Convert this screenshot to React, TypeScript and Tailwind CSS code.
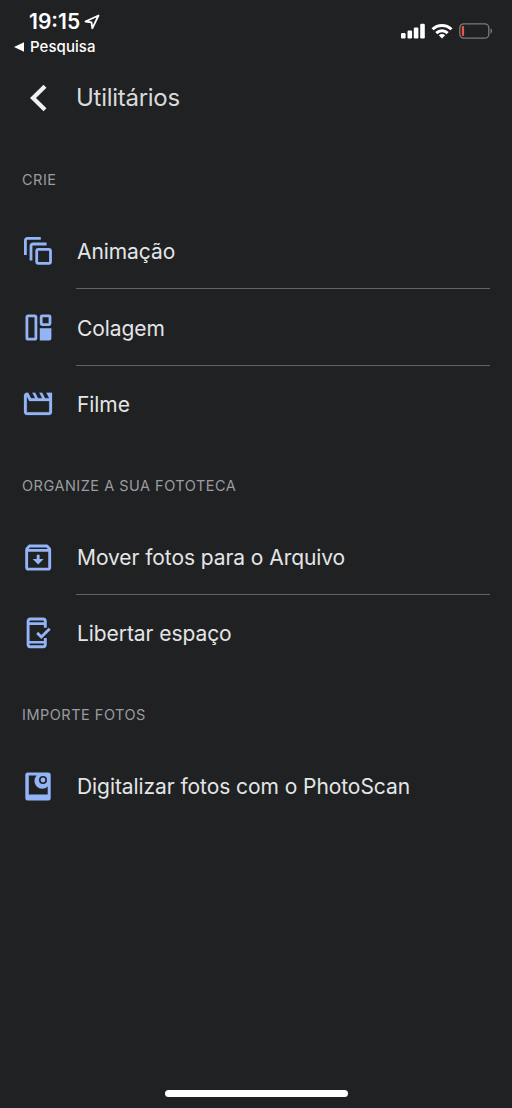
import type { ReactNode } from "react";

const ICON = "h-8 w-8 shrink-0 text-[#94b4f8]";

function AnimationIcon() {
  return (
    <svg viewBox="0 0 32 32" className={ICON} fill="none" stroke="currentColor" strokeWidth="2.8">
      <path d="M3.4 20V5.4a2 2 0 0 1 2-2H18.8" />
      <path d="M9 25.4V11a2 2 0 0 1 2-2H24.6" />
      <rect x="14.7" y="14.4" width="13.8" height="13.9" rx="1.6" />
    </svg>
  );
}

function CollageIcon() {
  return (
    <svg viewBox="0 0 32 32" className={ICON} fill="none" stroke="currentColor" strokeWidth="2.8">
      <rect x="4.9" y="4.8" width="9" height="23.4" rx="1.3" />
      <rect x="19.2" y="4.8" width="8.8" height="8.8" rx="1" />
      <path d="M17.8 17.2h11.6v10a2.3 2.3 0 0 1-2.3 2.3h-9.3z" fill="currentColor" stroke="none" />
    </svg>
  );
}

function MovieIcon() {
  return (
    <svg viewBox="0 0 32 32" className={ICON} fill="currentColor" stroke="currentColor">
      <path
        transform="translate(-.8 -.9) scale(1.4)"
        strokeWidth=".15"
        d="M4 6.47 5.76 10H20v8H4V6.47M22 4h-4l2 4h-3l-2-4h-2l2 4h-3l-2-4H8l2 4H7L5 4H4c-1.1 0-1.99.9-1.99 2L2 18c0 1.1.9 2 2 2h16c1.1 0 2-.9 2-2V4z"
      />
    </svg>
  );
}

function ArchiveIcon() {
  return (
    <svg viewBox="0 0 32 32" className={ICON} fill="currentColor">
      <g transform="translate(-1.1 -.7) scale(1.44)">
        <path d="M20.54 5.23l-1.39-1.68C18.88 3.21 18.47 3 18 3H6c-.47 0-.88.21-1.16.55L3.46 5.23C3.17 5.57 3 6.02 3 6.5V19c0 1.1.9 2 2 2h14c1.1 0 2-.9 2-2V6.500c0-.48-.17-.93-.46-1.270zM6.240 5h11.520l.83 1H5.420l.82-1zM5 19V8h14v11H5z" />
        <path d="M11 10h2v3h2.800L12 16.800 8.200 13H11z" />
      </g>
    </svg>
  );
}

function PhoneCheckIcon() {
  return (
    <svg viewBox="0 0 32 32" className={ICON} fill="none" stroke="currentColor" strokeWidth="2.9">
      <path d="M23.300 10.800V4.200a2.200 2.200 0 0 0-2.200-2.200H8.300a2.200 2.200 0 0 0-2.200 2.200V27.600a2.200 2.200 0 0 0 2.200 2.200H21.100a2.200 2.200 0 0 0 2.200-2.200V21" />
      <path d="M6 6.600H23.300M6 25.200H23.300" strokeWidth="2.600" />
      <path d="M15.200 15.900l4.100 4.100 8.400-8.200" />
    </svg>
  );
}

function PhotoScanIcon() {
  return (
    <svg viewBox="0 0 32 32" className={ICON} fill="currentColor">
      <path
        fillRule="evenodd"
        d="M5.800 2.400H26.200a2.500 2.500 0 0 1 2.500 2.500V27.900a2.500 2.500 0 0 1-2.500 2.500H5.800a2.500 2.500 0 0 1-2.500-2.500V4.900a2.500 2.500 0 0 1 2.500-2.500zM6.800 5.600V24.600H25.700V16.400A7.200 7.200 0 0 1 14.600 5.600z"
      />
      <circle cx="21" cy="10" r="3.200" fill="none" stroke="#202122" strokeWidth="1.600" />
    </svg>
  );
}

function SectionTitle({ children }: { children: ReactNode }) {
  return (
    <h2 className="flex h-[76.4px] items-center pt-[11px] pl-[22px] text-[14.5px] tracking-[0.5px] text-[#9a9ca1]">
      {children}
    </h2>
  );
}

function Row({ icon, label, divider = false }: { icon: ReactNode; label: string; divider?: boolean }) {
  return (
    <li className="flex h-[76.4px] items-center gap-[22px] pl-[22px]">
      {icon}
      <div
        className={`mr-[22px] flex h-full flex-1 items-center border-b pt-[3px] pl-px text-[21px] tracking-[-0.07px] whitespace-nowrap text-[#e4e5e7] ${
          divider ? "border-[#626365]" : "border-transparent"
        }`}
      >
        {label}
      </div>
    </li>
  );
}

function StatusBar() {
  return (
    <header className="flex h-[60px] justify-between text-white">
      <div className="pt-[10px] pl-[14px]">
        <div className="flex h-6 items-center gap-1 pl-[15px] text-[21px] font-semibold">
          <span>19:15</span>
          <svg viewBox="0 0 16 16" className="h-4 w-4" fill="none" stroke="currentColor" strokeWidth="1.800" strokeLinejoin="round">
            <path d="M14.500 1.500 1.500 7.500l6 .9.800 6z" />
          </svg>
        </div>
        <div className="flex h-[26px] items-center gap-[6px] text-[15px] font-medium">
          <svg viewBox="0 0 10 10" className="h-[10px] w-[10px]" fill="currentColor">
            <path d="M0 5 10 .3v9.400z" />
          </svg>
          <span className="tracking-[0.05px]">Pesquisa</span>
        </div>
      </div>
      <div className="flex h-[62px] items-center gap-[6px] pr-[19px]">
        <svg viewBox="0 0 25 16" className="h-4 w-[25px]" fill="currentColor">
          <rect x="1" y="10" width="4.600" height="5.500" rx="1.200" />
          <rect x="7.500" y="7.500" width="4.600" height="8" rx="1.200" />
          <rect x="13.800" y="4.500" width="4.600" height="11" rx="1.200" />
          <rect x="20.200" y=".8" width="4.600" height="14.700" rx="1.200" />
        </svg>
        <svg viewBox="0 0 22 16" className="h-4 w-[22px]" fill="none" stroke="currentColor" strokeWidth="3">
          <path d="M1.500 6.300a13.500 13.500 0 0 1 19 0" />
          <path d="M5.300 10.100a8.100 8.100 0 0 1 11.400 0" />
          <path d="M11 15.500 7.800 12.300a4.500 4.500 0 0 1 6.400 0z" fill="currentColor" stroke="none" />
        </svg>
        <svg viewBox="0 0 34 16" className="h-4 w-[34px]" fill="none">
          <rect x=".8" y=".8" width="29" height="14.400" rx="4" stroke="#7b7b7c" strokeWidth="1.300" />
          <rect x="2.800" y="3" width="2.300" height="10" rx="1" fill="#ee5346" />
          <path d="M31.500 5.300c2 .8 2 4.600 0 5.400z" fill="#7b7b7c" />
        </svg>
      </div>
    </header>
  );
}

export default function App() {
  return (
    <div className="flex h-[1108px] w-[512px] flex-col overflow-hidden bg-[#202122] font-['Inter',sans-serif]">
      <StatusBar />
      <div className="flex h-[76.4px] items-center pl-[29px]">
        <svg viewBox="0 0 18 28" className="h-7 w-[18px]" fill="none" stroke="#f1f1f1" strokeWidth="4.200">
          <path d="M16 2.200 4 14l12 11.800" />
        </svg>
        <h1 className="pl-[29px] text-[24px] tracking-[-0.28px] text-[#d9dadc]">Utilitários</h1>
      </div>
      <SectionTitle>CRIE</SectionTitle>
      <ul>
        <Row icon={<AnimationIcon />} label="Animação" divider />
        <Row icon={<CollageIcon />} label="Colagem" divider />
        <Row icon={<MovieIcon />} label="Filme" />
      </ul>
      <SectionTitle>ORGANIZE A SUA FOTOTECA</SectionTitle>
      <ul>
        <Row icon={<ArchiveIcon />} label="Mover fotos para o Arquivo" divider />
        <Row icon={<PhoneCheckIcon />} label="Libertar espaço" />
      </ul>
      <SectionTitle>IMPORTE FOTOS</SectionTitle>
      <ul>
        <Row icon={<PhotoScanIcon />} label="Digitalizar fotos com o PhotoScan" />
      </ul>
      <div className="mt-auto mb-[11px] h-[7px] w-[183px] self-center rounded-full bg-white" />
    </div>
  );
}
